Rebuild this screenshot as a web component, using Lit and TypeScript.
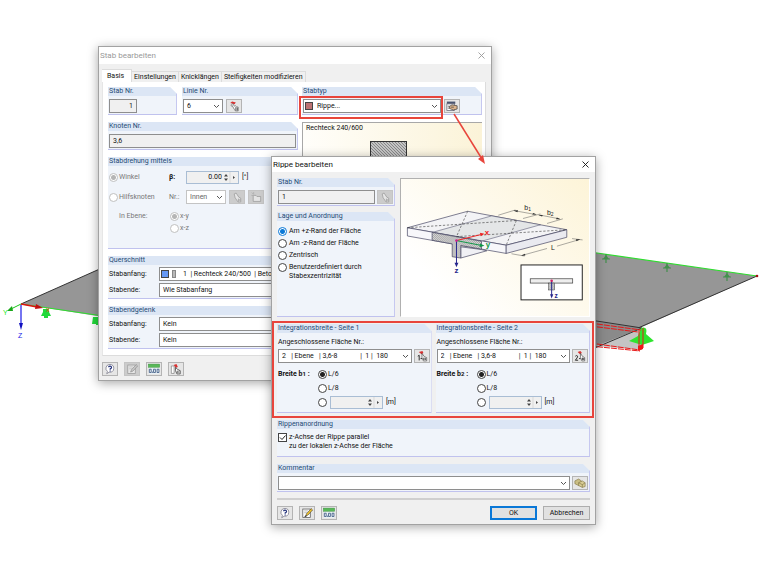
import { LitElement, html, svg, css, nothing, TemplateResult } from "lit";
import { customElement, property } from "lit/decorators.js";

const NB = "\u00a0";
const gap = (n: number) => NB.repeat(n);
const surfaceText =
  "2" + gap(3) + "|" + gap(1) + "Ebene" + gap(3) + "|" + gap(1) + "3,6-8" + gap(13) + "|" + gap(2) + "1" + gap(1) + "|" + gap(2) + "180";

const base = css`
  * {
    box-sizing: border-box;
  }
  :host {
    font-family: Roboto, "Liberation Sans", sans-serif;
    font-size: 7px;
    line-height: 9px;
    color: #111;
  }
  svg {
    display: block;
  }
`;

const icons: Record<string, TemplateResult> = {
  pick: svg`<path d="M3.500 3l2-1.500 4 1-1.500 2z" fill="#d83030"/><path d="M6 3.500L5 5l3 5 1 1.500h3V7.500l-2-.5-1-1-1 .5z" fill="#fff" stroke="#666" stroke-width=".8"/><path d="M9.500 7.500v3.500M11 8v3" stroke="#222" stroke-width=".8"/><path d="M4 5l1 2" stroke="#888" stroke-width=".7"/>`,
  pickOff: svg`<path d="M4.500 3l2-1 3 4.500 2 1v4h-3l-3-4.500z" fill="#e6e6e6" stroke="#999" stroke-width=".8"/><path d="M9 8v3M10.500 8.500v2" stroke="#888" stroke-width=".7"/>`,
  folderOff: svg`<path d="M3 1.500l2 2M2.500 4.500h2M5 1v2" stroke="#aaa" stroke-width=".8"/><path d="M4.500 4.500h3l1 1.200h4V11h-8z" fill="#e4e4e4" stroke="#999" stroke-width=".8"/>`,
  edit: svg`<rect x="2" y="1.500" width="9" height="2.500" fill="#4a5570"/><rect x="2" y="4" width="8" height="7" fill="#fff" stroke="#667" stroke-width=".8"/><path d="M5 6.500l2.500-1.500 5.500 1v3.500L9 10.500 5 9z" fill="#dcb48c" stroke="#333" stroke-width=".7"/><path d="M3 6.500h2M3 8.500h2M6.500 7.500h3" stroke="#333" stroke-width=".7"/>`,
  help: svg`<path d="M7.500 1.300a4.500 4.200 0 1 1-1 8.400L4 11.300l.8-2.500A4.500 4.200 0 0 1 7.500 1.300z" fill="#fff" stroke="#778" stroke-width=".8"/><path d="M5.800 4.300q1.700-2 3.200-.4.600 1.400-1.300 2.200v1M7.700 7.800v1" fill="none" stroke="#26347c" stroke-width="1.300"/>`,
  note: svg`<rect x="3" y="2" width="8" height="9" fill="#fff" stroke="#555" stroke-width=".8"/><path d="M4.500 4h4M4.500 6h3" stroke="#888" stroke-width=".6"/><path d="M6 9.500l1-2.500 5-5.500 1.500 1.500-5 5.500z" fill="#f3c52b" stroke="#333" stroke-width=".6"/><path d="M5 10l2-.5" stroke="#111"/>`,
  noteOff: svg`<rect x="3" y="2" width="8" height="9" fill="#e6e6e6" stroke="#999" stroke-width=".8"/><path d="M4.500 4h4M4.500 6h3" stroke="#aaa" stroke-width=".6"/><path d="M6 9.500l1-2.500 5-5.500 1.500 1.500-5 5.500z" fill="#c8c8c8" stroke="#888" stroke-width=".7"/>`,
  units: svg`<rect x="1.500" y="1" width="12" height="3.500" fill="#58b858" stroke="#388e3c" stroke-width=".5"/><rect x="2" y="5" width="11" height="6.500" fill="#e9f1f6"/><path d="M2.500 6.500h2v3.500h-2zM7 6.500h2v3.500H7zM10.800 6.500h2v3.500h-2zM5.800 9v1.500" fill="none" stroke="#2c4a78" stroke-width=".8"/>`,
  pickMember: svg`<path d="M2.500 3v8M2.500 3h3v8h-3" fill="#fff" stroke="#777" stroke-width=".7"/><path d="M5 2l3-1 1.500 3-2 1z" fill="#d83030"/><path d="M7 4.500l2.500 2.500 2.500 1v3.500H8.500L7 8z" fill="#fff" stroke="#333" stroke-width=".8"/><path d="M9 8v2.500M10.500 8.500v2" stroke="#333" stroke-width=".7"/>`,
  hand1: svg`<path d="M4 2l4-1 1 2-2 1.500z" fill="#d83030"/><path d="M7.500 3.500l2.500 3.500 2.500 1v3.500H9L7.500 8z" fill="#fff" stroke="#444" stroke-width=".7"/><path d="M3 6.500L4.500 5.500v5.500M6 9h1.500M9.500 8v2.500M11 8.500v2" fill="none" stroke="#111" stroke-width=".9"/>`,
  hand2: svg`<path d="M5 2l3-1 1.500 2-2 1.500z" fill="#d83030"/><path d="M8 3.500l2.500 3.500 2 1v3.500H9.500L8 8z" fill="#fff" stroke="#444" stroke-width=".7"/><path d="M2.500 6.500q1.500-1.500 2.500 0 0 1.500-2.500 4.300h3M6.500 9H8M10 8v2.500M11.500 8.500v2" fill="none" stroke="#111" stroke-width=".9"/>`,
  books: svg`<path d="M2 4l4-2 3 2v4l-3 1-4-2z" fill="#c9bd83" stroke="#766b3a" stroke-width=".6"/><path d="M6 6l4-2 3 2v4l-3 1-4-2z" fill="#d8cc94" stroke="#766b3a" stroke-width=".6"/><path d="M6 6l4 2 3-2M10 8v3" fill="none" stroke="#766b3a" stroke-width=".6"/>`,
};

/** Small push button that carries one icon. */
@customElement("icon-button")
class IconButton extends LitElement {
  @property() icon = "help";
  @property() label = "";
  @property({ type: Boolean }) off = false;

  static styles = [
    base,
    css`
      :host {
        display: block;
        flex: none;
      }
      button {
        display: block;
        width: 16px;
        height: 14px;
        padding: 0;
        border: 1px solid #b4b4b4;
        background: #e6e6e6;
      }
      button:disabled {
        background: #cccccc;
        border-color: #c4c4c4;
      }
      svg {
        width: 14px;
        height: 12px;
      }
    `,
  ];

  render() {
    return html`<button type="button" aria-label=${this.label} ?disabled=${this.off}>
      <svg viewBox="0 0 15 12.500" aria-hidden="true">${icons[this.icon]}</svg>
    </button>`;
  }
}

/** Titled section with a clipped upper right corner. */
@customElement("field-group")
class FieldGroup extends LitElement {
  @property() heading = "";

  static styles = [
    base,
    css`
      :host {
        display: flex;
        flex-direction: column;
        min-width: 0;
        background: #f0f4fa;
        border-right: 1px solid #c6c8f0;
        border-bottom: 1px solid #c0c2ee;
        clip-path: polygon(0 0, calc(100% - 7px) 0, 100% 7px, 100% 100%, 0 100%);
      }
      h3 {
        margin: 0;
        padding: 0 1px;
        background: #dce6f5;
        color: #1f4a74;
        font-size: 7px;
        line-height: 9px;
        font-weight: normal;
      }
    `,
  ];

  render() {
    return html`<h3>${this.heading}</h3>
      <slot></slot>`;
  }
}

const chevron = html`<svg class="chevron" viewBox="0 0 7 5" aria-hidden="true">
  <path d="M1 1l2.500 2.500L6 1" fill="none" stroke="#555" stroke-width="1" />
</svg>`;

const combo = (label: string, text: string, opts: { off?: boolean; swatch?: string; cls?: string } = {}) => html`
  <span class="combo ${opts.cls ?? ""}">
    <select
      aria-label=${label}
      ?disabled=${opts.off ?? false}
      class=${opts.swatch ?? ""}
    >
      <option>${text}</option>
    </select>
    ${opts.swatch
      ? html`<span class="swatches"><i class="chip ${opts.swatch}"></i>${opts.swatch === "blue" ? html`<i class="bar"></i>` : nothing}</span>`
      : nothing}
    ${chevron}
  </span>
`;

const spin = (label: string, value: string, disabled: boolean) => html`
  <span class="spin">
    <input type="text" aria-label=${label} .value=${value} ?readonly=${!disabled} ?disabled=${disabled} />
    <svg viewBox="0 0 18 13" aria-hidden="true">
      <path d="M3 5.500l2-2.500 2 2.500zM3 7.500l2 2.500 2-2.500zM12 5l2 1.500L12 8z" fill="#444" />
      <path d="M9 1v11" stroke="#d0d0d0" stroke-width=".7" />
    </svg>
  </span>
`;

const radio = (group: string, text: unknown, checked = false, off = false, label = "") => html`
  <label class="radio ${off ? "off" : ""}">
    <input type="radio" name=${group} aria-label=${label || nothing} ?checked=${checked} ?disabled=${off} />
    ${text === "" ? nothing : html`<span>${text}</span>`}
  </label>
`;

const form = css`
  .chevron {
    position: absolute;
    right: 3px;
    top: 5px;
    width: 7px;
    height: 5px;
  }
  .combo {
    position: relative;
    display: block;
    height: 14px;
    min-width: 0;
  }
  .grow {
    flex: 1;
  }
  .w40 {
    width: 40px;
  }
  select,
  input[type="text"] {
    display: block;
    width: 100%;
    height: 14px;
    margin: 0;
    padding: 0 3px;
    border: 1px solid #8e8e8e;
    border-radius: 0;
    background: #fff;
    color: #111;
    font: inherit;
    appearance: none;
    opacity: 1;
  }
  select:disabled {
    border-color: #c4c4c4;
    color: #666;
  }
  select.red {
    padding-left: 13px;
  }
  select.blue {
    padding-left: 23px;
  }
  input[type="text"]:read-only,
  input[type="text"]:disabled {
    background: #f0f0f0;
  }
  .swatches {
    position: absolute;
    left: 2px;
    top: 2px;
    display: flex;
    gap: 3px;
    align-items: center;
    height: 10px;
    pointer-events: none;
  }
  .chip {
    width: 8px;
    height: 8px;
    border: 1px solid #444;
  }
  .chip.red {
    background: #bc7272;
  }
  .chip.blue {
    background: #6699f5;
  }
  .bar {
    width: 4px;
    height: 8px;
    background: #b8b8b8;
    border: 1px solid #888;
  }
  .spin {
    position: relative;
    display: block;
    width: 53px;
  }
  .spin input[type="text"] {
    height: 13px;
    border-color: #a9bdd4;
    padding-right: 16px;
    text-align: right;
  }
  .spin svg {
    position: absolute;
    right: 0;
    top: 0;
    width: 18px;
    height: 13px;
  }
  .radio {
    display: flex;
    align-items: flex-start;
    gap: 1px;
    line-height: 9px;
  }
  .radio input {
    appearance: none;
    flex: none;
    width: 9px;
    height: 9px;
    margin: 0;
    border: 1px solid #444;
    border-radius: 50%;
    background: #fff;
  }
  .radio input:checked {
    background: radial-gradient(circle, #222 0 2px, #fff 3px);
  }
  .radio.off {
    color: #777;
  }
  .radio.off input {
    border-color: #c0c0c0;
  }
  .radio.off input:checked {
    background: radial-gradient(circle, #b5b5b5 0 2px, #fff 3px);
  }
  .row {
    display: flex;
    align-items: center;
    gap: 3px;
  }
  .one {
    padding: 3px 1px 1px;
  }
`;

const frame = css`
  :host {
    display: block;
    background: #f0f0f0;
    border: 1px solid #a2a2a2;
    box-shadow: 0 2px 10px rgba(0, 0, 0, 0.35);
  }
  .title {
    display: flex;
    align-items: center;
    justify-content: space-between;
    background: #fff;
    padding: 0 6px 0 1px;
  }
  h2 {
    margin: 0;
    font-size: 8px;
    font-weight: normal;
  }
  .close {
    width: 7px;
    height: 7px;
    padding: 0;
    border: 0;
    background: none;
    color: inherit;
  }
  .tools {
    display: flex;
    align-items: center;
    gap: 6px;
  }
`;

const closeButton = html`<button class="close" type="button" aria-label="Schließen">
  <svg viewBox="0 0 7 7"><path d="M.5.5l6 6M6.500.5l-6 6" stroke="currentColor" stroke-width=".9" /></svg>
</button>`;

@customElement("member-dialog")
class MemberDialog extends LitElement {
  static styles = [
    base,
    form,
    frame,
    css`
      .title {
        height: 17px;
        color: #999;
      }
      .main {
        padding: 5px 5px 4px 3px;
      }
      .tabs {
        display: flex;
        align-items: flex-end;
        height: 13px;
      }
      .tab {
        height: 11px;
        padding: 0 2px;
        border: 1px solid #dcdcdc;
        border-left: 0;
        border-bottom: 0;
        background: #f0f0f0;
        font: inherit;
        color: #111;
      }
      .tab.active {
        height: 13px;
        padding: 0 7px 0 5px;
        background: #fff;
      }
      .panel {
        display: grid;
        grid-template-columns: 190px 1fr;
        gap: 4px;
        padding: 5px 3px 6px 5px;
        background: #fff;
        border: 1px solid #dcdcdc;
        border-top: 0;
        border-left-color: #e6e6e6;
      }
      .col {
        display: flex;
        flex-direction: column;
        gap: 7px;
        min-width: 0;
      }
      .pair {
        display: grid;
        grid-template-columns: 69px 1fr;
        gap: 5px;
      }
      .number {
        width: 30px;
      }
      .number input[type="text"] {
        text-align: right;
      }
      .turn {
        display: grid;
        grid-template-columns: 57px 14px 1fr;
        gap: 6px 3px;
        align-items: center;
        padding: 4px 1px 15px;
      }
      .turn .row {
        height: 14px;
      }
      .faint {
        color: #777;
      }
      .indent {
        padding: 2px 0 0 10px;
        align-self: start;
      }
      .plane {
        grid-column: 2 / 4;
        padding: 2px 0 0 1px;
        display: grid;
        gap: 3px;
      }
      .wide {
        display: grid;
        grid-template-columns: 48px 1fr;
        gap: 2px;
        align-items: center;
        padding: 2px 0 1px 1px;
      }
      .type {
        position: relative;
      }
      .typefield {
        width: 138px;
      }
      .halo {
        position: absolute;
        left: -3px;
        top: 9px;
        width: 144px;
        height: 23px;
        border: 2px solid #e8453c;
        pointer-events: none;
      }
      .preview {
        flex: 1;
        padding: 1px 3px;
        border: 1px solid #a8a8a8;
        border-right: 0;
        background: linear-gradient(90deg, #fffefa, #fbf3d8);
      }
      .preview svg {
        width: 37px;
        height: 60px;
        margin: 8px 0 0 64px;
      }
      .tools {
        margin-top: 6px;
      }
    `,
  ];

  render() {
    return html`
      <div class="title">
        <h2>Stab bearbeiten</h2>
        ${closeButton}
      </div>
      <div class="main">
        <div class="tabs" role="tablist">
          ${["Basis", "Einstellungen", "Knicklängen", "Steifigkeiten modifizieren"].map(
            (t, i) => html`<button type="button" role="tab" class="tab ${i ? "" : "active"}">${t}</button>`
          )}
        </div>
        <div class="panel">
          <div class="col">
            <div class="pair">
              <field-group heading="Stab Nr.">
                <div class="one number"><input type="text" aria-label="Stab Nr." readonly value="1" /></div>
              </field-group>
              <field-group heading="Linie Nr.">
                <div class="one row">
                  ${combo("Linie Nr.", "6", { cls: "w40" })}
                  <icon-button icon="pick" label="Linie wählen"></icon-button>
                </div>
              </field-group>
            </div>
            <field-group heading="Knoten Nr.">
              <div class="one"><input type="text" aria-label="Knoten Nr." readonly value="3,6" /></div>
            </field-group>
            <field-group heading="Stabdrehung mittels">
              <div class="turn">
                ${radio("turn", "Winkel", true, true)}
                <b>β:</b>
                <div class="row">${spin("Winkel β", "0.00", false)}<span>[°]</span></div>
                ${radio("turn", "Hilfsknoten", false, true)}
                <span class="faint">Nr.:</span>
                <div class="row">
                  ${combo("Hilfsknoten Nr.", "Innen", { off: true, cls: "w40" })}
                  <icon-button icon="pickOff" label="Knoten wählen" off></icon-button>
                  <icon-button icon="folderOff" label="Knoten anlegen" off></icon-button>
                </div>
                <span class="faint indent">In Ebene:</span>
                <div class="plane">${radio("plane", "x-y", true, true)}${radio("plane", "x-z", false, true)}</div>
              </div>
            </field-group>
            <field-group heading="Querschnitt">
              <div class="wide">
                <span>Stabanfang:</span>
                ${combo("Querschnitt Stabanfang", "1" + gap(2) + "|" + gap(1) + "Rechteck 240/500" + gap(2) + "|" + gap(1) + "Beton C30/37", { swatch: "blue" })}
                <span>Stabende:</span>
                ${combo("Querschnitt Stabende", "Wie Stabanfang")}
              </div>
            </field-group>
            <field-group heading="Stabendgelenk">
              <div class="wide">
                <span>Stabanfang:</span>
                ${combo("Gelenk Stabanfang", "Kein")}
                <span>Stabende:</span>
                ${combo("Gelenk Stabende", "Kein")}
              </div>
            </field-group>
          </div>
          <div class="col">
            <div class="type">
              <field-group heading="Stabtyp">
                <div class="one row">
                  <span class="typefield">${combo("Stabtyp", "Rippe...", { swatch: "red" })}</span>
                  <icon-button icon="edit" label="Rippe bearbeiten"></icon-button>
                </div>
              </field-group>
              <span class="halo"></span>
            </div>
            <div class="preview">
              Rechteck 240/600
              <svg viewBox="0 0 37 60" aria-hidden="true">
                <defs>
                  <pattern id="hatch" width="3" height="3" patternUnits="userSpaceOnUse">
                    <rect width="3" height="3" fill="#c4c4c4" />
                    <path d="M0 0l3 3" stroke="#777" stroke-width=".8" />
                  </pattern>
                </defs>
                <rect x=".5" y=".5" width="36" height="59" fill="url(#hatch)" stroke="#333" />
              </svg>
            </div>
          </div>
        </div>
        <div class="tools">
          <icon-button icon="help" label="Hilfe"></icon-button>
          <icon-button icon="noteOff" label="Kommentar" off></icon-button>
          <icon-button icon="units" label="Einheiten"></icon-button>
          <icon-button icon="pickMember" label="Stab wählen"></icon-button>
        </div>
      </div>
    `;
  }
}

@customElement("rib-dialog")
class RibDialog extends LitElement {
  static styles = [
    base,
    form,
    frame,
    css`
      .title {
        height: 15px;
        color: #111;
      }
      .main {
        display: flex;
        flex-direction: column;
        gap: 7px;
        padding: 6px 5px 4px;
      }
      .upper {
        display: grid;
        grid-template-columns: 118px 1fr;
        gap: 5px;
      }
      .left {
        display: flex;
        flex-direction: column;
        gap: 6px;
      }
      .left .lage {
        flex: 1;
      }
      .picture {
        border: 1px solid #b0b0b0;
        border-right-color: #fff;
        border-bottom-color: #fff;
        background: linear-gradient(45deg, #fff 20%, #fdf4d8);
      }
      .picture svg {
        width: 100%;
        height: 137px;
      }
      .number {
        flex: 1;
      }
      .one.row {
        gap: 2px;
      }
      .places {
        display: grid;
        gap: 3px;
        padding: 6px 1px;
      }
      .places .radio {
        gap: 2px;
      }
      .places input:checked {
        border-color: #0a78d7;
        background: radial-gradient(circle, #0a78d7 0 2px, #fff 3px);
      }
      .sides {
        position: relative;
        display: grid;
        grid-template-columns: 1fr 1fr;
        gap: 4px;
      }
      .sides::after {
        content: "";
        position: absolute;
        inset: -3px -4px -5px -5px;
        border: 2px solid #e8453c;
        pointer-events: none;
      }
      .side {
        padding: 5px 1px 3px;
      }
      .surface {
        display: flex;
        gap: 2px;
        margin: 2px 0 4px;
      }
      .width {
        display: grid;
        grid-template-columns: 39px 9px 1fr;
        grid-auto-rows: 14px;
        column-gap: 1px;
        align-items: center;
      }
      .width .radio {
        grid-column: 2 / 4;
      }
      .width .first {
        grid-row: 1;
      }
      .index {
        font-size: 6px;
      }
      .custom {
        grid-column: 2 / 4;
        display: flex;
        align-items: center;
        gap: 3px;
      }
      .axis {
        display: flex;
        align-items: flex-start;
        gap: 2px;
        padding: 4px 1px 5px;
      }
      .axis input {
        appearance: none;
        display: block;
        width: 9px;
        height: 9px;
        margin: 0;
        border: 1px solid #444;
        background: #fff;
      }
      .tick {
        position: relative;
        display: block;
        flex: none;
        height: 9px;
      }
      .tick svg {
        position: absolute;
        inset: 0;
        width: 9px;
        height: 9px;
        pointer-events: none;
      }
      hr {
        width: 100%;
        height: 2px;
        margin: -1px 0;
        border: 0;
        background: #cfcfcf;
      }
      .push {
        width: 47px;
        height: 14px;
        padding: 0;
        border: 1px solid #adadad;
        background: #e1e1e1;
        color: #111;
        font: inherit;
      }
      .push.ok {
        border: 2px solid #0a78d7;
        margin-left: auto;
      }
    `,
  ];

  private side(n: number) {
    return html`
      <field-group heading="Integrationsbreite - Seite ${n}">
        <div class="side">
          <div>Angeschlossene Fläche Nr.:</div>
          <div class="surface">
            ${combo(`Angeschlossene Fläche Nr. Seite ${n}`, surfaceText, { cls: "grow" })}
            <icon-button icon="hand${n}" label="Fläche wählen"></icon-button>
          </div>
          <div class="width">
            <b class="first">Breite b<span class="index">${n}</span> :</b>
            ${radio("w" + n, "L/6", true)} ${radio("w" + n, "L/8")}
            <div class="custom">
              ${radio("w" + n, "", false, false, "Breite eingeben")} ${spin("Breite", "", true)}
              <span>[m]</span>
            </div>
          </div>
        </div>
      </field-group>
    `;
  }

  private drawing() {
    return svg`
      <defs>
        <pattern id="cut" width="6" height="6" patternUnits="userSpaceOnUse">
          <rect width="6" height="6" fill="#eee"/><path d="M0 6L6 0" stroke="#333" stroke-width="1.500"/>
        </pattern>
      </defs>
      <g stroke="#3d3d5c" stroke-width="2" stroke-linejoin="round">
        <path d="M34 170L217 120L518 176L334 223Z" fill="#f3f3f5"/>
        <path d="M110 184L290 134L438 161L259 211Z" fill="#e4e6e7" stroke-width="1.500"/>
        <path d="M34 170V195L334 248V223Z" fill="#f7f7fa"/>
        <path d="M334 223V248L518 199V176Z" fill="#eaeaf0"/>
        <path d="M196 228V262L275 240L258 236Z" fill="#f0f0f4"/>
        <path d="M109 184L259 211V235L196 224V262L170 258V219L109 208Z" fill="url(#cut)"/>
      </g>
      <g fill="none" stroke="#333" stroke-width="1.800" stroke-dasharray="7 5">
        <path d="M217 120L183 197M34 170L365 148M365 148L334 223M183 197L518 176"/>
      </g>
      <g fill="none" stroke="#555" stroke-width="1.500">
        <path d="M310 132L362 116M385 142L438 128M458 157L506 143M358 118L424 130M434 131L496 143M350 249L390 256M534 203L566 207M382 254L458 233M488 226L556 206"/>
      </g>
      <path d="M356 118l14-1-2 6zM427 130l-14 0 3-5zM431 131l14 0-2 5zM499 144l-14 0 3-5zM379 255l12-6 1 5zM559 205l-13 0 1 6z" fill="#333"/>
      <g stroke-width="3" fill="none">
        <path d="M183 209L256 191" stroke="#f02020"/><path d="M183 209L255 223" stroke="#109848"/><path d="M183 209V278" stroke="#26268c"/>
      </g>
      <path d="M268 188l-14-3 3 11z" fill="#f02020"/><path d="M268 225l-13-7-2 11z" fill="#109848"/><path d="M183 290l-6-14h12z" fill="#26268c"/>
      <circle cx="183" cy="209" r="4" fill="#d02090"/>
      <g font-family="Liberation Sans" font-size="21">
        <text x="269" y="192" fill="#f02020" font-weight="bold" font-size="24">x</text>
        <text x="272" y="230" fill="#109848" font-weight="bold" font-size="24">y</text>
        <text x="177" y="307" fill="#26268c" font-weight="bold" font-size="24">z</text>
        <text x="389" y="115" fill="#222">b<tspan font-size="15" dy="4">1</tspan></text>
        <text x="458" y="130" fill="#222">b<tspan font-size="15" dy="4">2</tspan></text>
        <text x="470" y="239" fill="#222">L</text>
      </g>
      <rect x="379" y="283" width="186" height="106" fill="#fff" stroke="#222" stroke-width="3"/>
      <rect x="407" y="325" width="129" height="13" fill="#eee" stroke="#333" stroke-width="2"/>
      <rect x="463" y="338" width="18" height="21" fill="url(#cut)" stroke="#333" stroke-width="1.500"/>
      <path d="M472 332V374" stroke="#26268c" stroke-width="3"/><path d="M472 385l-5-13h10z" fill="#26268c"/>
      <circle cx="472" cy="331" r="4" fill="#d02060"/>
      <text x="481" y="383" fill="#26268c" font-weight="bold" font-family="Liberation Sans" font-size="20">z</text>
    `;
  }

  render() {
    return html`
      <div class="title">
        <h2>Rippe bearbeiten</h2>
        ${closeButton}
      </div>
      <div class="main">
        <div class="upper">
          <div class="left">
            <field-group heading="Stab Nr.">
              <div class="one row">
                <span class="number"><input type="text" aria-label="Stab Nr." readonly value="1" /></span>
                <icon-button icon="pickOff" label="Stab wählen" off></icon-button>
              </div>
            </field-group>
            <field-group class="lage" heading="Lage und Anordnung">
              <div class="places">
                ${radio("lage", "Am +z-Rand der Fläche", true)} ${radio("lage", "Am -z-Rand der Fläche")}
                ${radio("lage", "Zentrisch")}
                ${radio("lage", html`Benutzerdefiniert durch<br />Stabexzentrizität`)}
              </div>
            </field-group>
          </div>
          <div class="picture"><svg viewBox="15 22 570 416">${this.drawing()}</svg></div>
        </div>
        <div class="sides">${this.side(1)} ${this.side(2)}</div>
        <field-group heading="Rippenanordnung">
          <label class="axis">
            <span class="tick">
              <input type="checkbox" checked />
              <svg viewBox="0 0 9 9" aria-hidden="true"><path d="M2 4.500l2 2L7.500 2.500" fill="none" stroke="#222" /></svg>
            </span>
            <span>z-Achse der Rippe parallel<br />zu der lokalen z-Achse der Fläche</span>
          </label>
        </field-group>
        <field-group heading="Kommentar">
          <div class="one row">
            ${combo("Kommentar", "", { cls: "grow" })}
            <icon-button icon="books" label="Kommentare"></icon-button>
          </div>
        </field-group>
        <hr />
        <div class="tools">
          <icon-button icon="help" label="Hilfe"></icon-button>
          <icon-button icon="note" label="Kommentar"></icon-button>
          <icon-button icon="units" label="Einheiten"></icon-button>
          <button class="push ok" type="button">OK</button>
          <button class="push" type="button">Abbrechen</button>
        </div>
      </div>
    `;
  }
}

@customElement("app-root")
class AppRoot extends LitElement {
  static styles = [
    base,
    css`
      :host {
        display: block;
        position: relative;
        min-height: 100vh;
        overflow: hidden;
        background: #fff;
      }
      .model {
        width: 100%;
      }
      member-dialog {
        position: absolute;
        left: 98px;
        top: 46px;
        width: 394px;
      }
      rib-dialog {
        position: absolute;
        left: 271px;
        top: 156px;
        width: 325px;
      }
      .arrow {
        position: absolute;
        left: 450px;
        top: 110px;
        width: 40px;
        height: 60px;
      }
    `,
  ];

  private support(x: number, y: number) {
    return svg`<g transform="translate(${x} ${y})" fill="#2f8f3c" stroke="#2f8f3c" opacity=".8">
      <path d="M0 0v9M-4 5h8" stroke-width="1.200"/><path d="M0 1l-3 4h6z" stroke="none"/></g>`;
  }

  render() {
    return html`
      <svg class="model" viewBox="0 0 760 570" aria-hidden="true">
        <path d="M21 304L248 203L757 276L590 350L300 348Z" fill="#969696" />
        <path d="M21 304L248 203M757 276L590 349" stroke="#333" fill="none" />
        <path d="M21 304L110 317M590 252L757 276" stroke="#2fdc2f" stroke-width="1.200" />
        <path d="M590 321L642 328L590 349Z" fill="#8a8a8a" />
        <path d="M596 346L642 328V350Z" fill="#c4c4c4" />
        <path d="M590 320L642 328L590 350" stroke="#333" fill="none" />
        <path d="M641 328q7-2 5 6l8 7-12 4-13-4 9-5z" fill="#2fe52f" />
        <path d="M590 323L641 330M590 326L638 332M590 343L640 350M590 346L640 351" stroke="#e81818" stroke-dasharray="6 1" fill="none" />
        <path d="M639 329v21M643 328v20" stroke="#e81818" fill="none" />
        <path d="M638 346l5-2v5l-5 2z" fill="#f01818" />
        ${this.support(606, 254)} ${this.support(667, 263)} ${this.support(727, 272)}
        <path d="M43 309h6v3l2 4h-3v2h-4v-2h-3l2-4zM93 317h7v8h-4v-1h-4z" fill="#22d93a" />
        <path d="M21 304L11 309" stroke="#18c818" />
        <path d="M7 311l5-5 1 5z" fill="#18a818" />
        <path d="M21 304L37 307" stroke="#e01010" stroke-width="1.500" />
        <path d="M43 308l-7-4-1 5z" fill="#c01010" />
        <path d="M21 305V325" stroke="#1818e8" stroke-width="1.200" />
        <path d="M21 330l-2-7h4z" fill="#1010c0" />
        <circle cx="757" cy="276" r="1.300" fill="#a01010" />
        <g font-family="Liberation Sans" font-size="7">
          <text x="3" y="315" fill="#18e818">Y</text>
          <text x="46" y="312" fill="#e84020">x</text>
          <text x="18" y="338" fill="#1818e8">Z</text>
        </g>
      </svg>
      <member-dialog></member-dialog>
      <rib-dialog></rib-dialog>
      <svg class="arrow" viewBox="0 0 40 60" aria-hidden="true">
        <path d="M4 4L32 49" stroke="#e8453c" stroke-width="1.500" />
        <path d="M35 54l-7-5 5-4z" fill="#e8453c" />
      </svg>
    `;
  }
}
